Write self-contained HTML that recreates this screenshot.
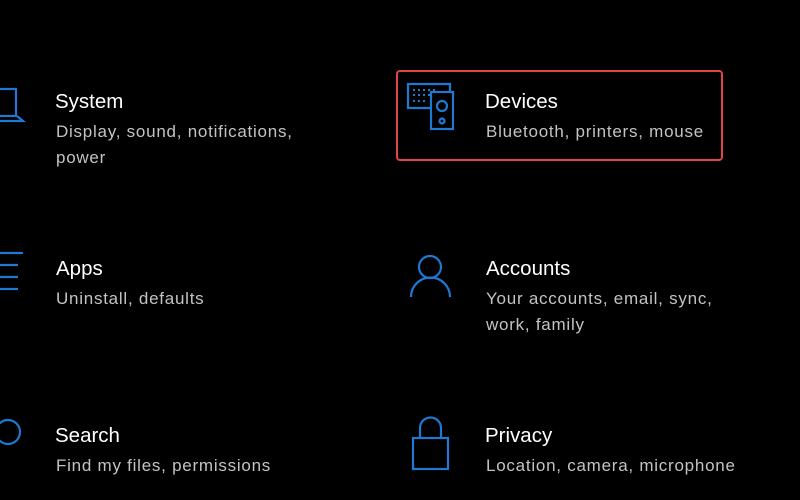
<!DOCTYPE html>
<html><head><style>
html,body{margin:0;padding:0;background:#000;width:800px;height:500px;overflow:hidden;font-family:"Liberation Sans",sans-serif}
.t{position:absolute;color:#fff;font-size:20.5px;white-space:nowrap}
.s{position:absolute;color:#c3c3c3;font-size:17px;letter-spacing:0.75px;line-height:26px;white-space:nowrap}
svg{position:absolute;left:0;top:0}
.box{position:absolute;left:396px;top:70px;width:323px;height:87px;border:2px solid #e04545;border-radius:4px}
</style></head><body>
<svg width="800" height="500" fill="none" stroke="#1f78d1" stroke-width="2.2">
<rect x="-3" y="89" width="19" height="27"/>
<path d="M-3 121 H23 L17 116"/>
<path d="M-2 253 H23 M-2 265 H18 M-2 277 H18 M-2 289 H18"/>
<circle cx="8" cy="432" r="12"/>
<path d="M430 108 H408 V84 H450 V92"/>
<rect x="431" y="92" width="22" height="37"/>
<circle cx="442" cy="106" r="5"/>
<circle cx="442" cy="121" r="2.5"/>
<path d="M413 90 h2 M418 90 h2 M423 90 h2 M428 90 h2 M433 90 h2 M413 95 h2 M418 95 h2 M423 95 h2 M428 95 h2 M413 101 h2 M418 101 h2 M423 101 h2" stroke-width="2"/>
<circle cx="430" cy="267" r="11"/>
<path d="M411 297 A19.5 19.5 0 0 1 450 297"/>
<path d="M420 438 V428 A10.5 10.5 0 0 1 441 428 V438"/>
<rect x="413" y="438" width="35" height="31"/>
</svg>
<div class="box"></div>
<div class="t" style="left:55px;top:90px">System</div>
<div class="s" style="left:56px;top:119px">Display, sound, notifications,<br>power</div>
<div class="t" style="left:485px;top:90px">Devices</div>
<div class="s" style="left:486px;top:119px">Bluetooth, printers, mouse</div>
<div class="t" style="left:56px;top:257px">Apps</div>
<div class="s" style="left:56px;top:286px">Uninstall, defaults</div>
<div class="t" style="left:486px;top:257px">Accounts</div>
<div class="s" style="left:486px;top:286px">Your accounts, email, sync,<br>work, family</div>
<div class="t" style="left:55px;top:424px">Search</div>
<div class="s" style="left:56px;top:453px">Find my files, permissions</div>
<div class="t" style="left:485px;top:424px">Privacy</div>
<div class="s" style="left:486px;top:453px">Location, camera, microphone</div>
</body></html>
